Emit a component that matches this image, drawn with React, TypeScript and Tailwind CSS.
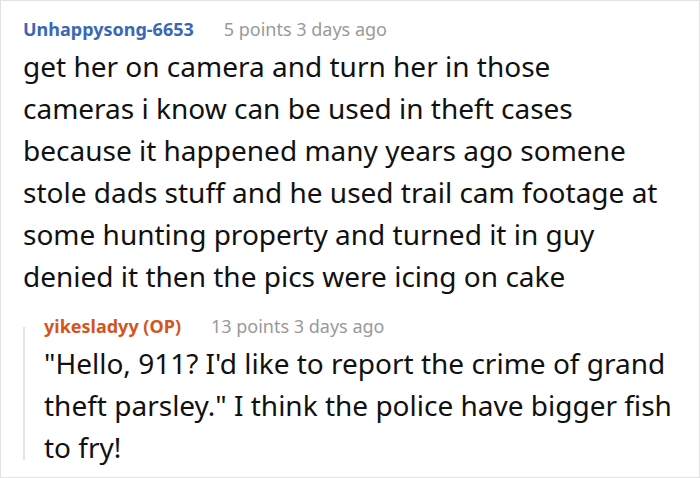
import React from 'react';

const Comment: React.FC<{
  author: string;
  authorClass: string;
  meta: string;
  children: React.ReactNode;
}> = ({ author, authorClass, meta, children }) => (
  <div>
    <div className="flex items-baseline text-[18px] leading-[24px]">
      <span className={`font-bold ${authorClass}`}>{author}</span>
      <span className="ml-[30px] text-[#999999]">{meta}</span>
    </div>
    <p className="mt-[4px] text-[28px] leading-[42px] text-[#111111]">{children}</p>
  </div>
);

const App: React.FC = () => {
  return (
    <div className="w-[700px] h-[478px] overflow-hidden border border-[#e2e2e2] bg-white font-['Noto_Sans',sans-serif]">
      <div className="pl-[22px] pr-[12px] pt-[16px]">
        {/* Parent comment */}
        <Comment author="Unhappysong-6653" authorClass="text-[#3a68b4]" meta="5 points 3 days ago">
          get her on camera and turn her in those
          <br />
          cameras i know can be used in theft cases
          <br />
          because it happened many years ago somene
          <br />
          stole dads stuff and he used trail cam footage at
          <br />
          some hunting property and turned it in guy
          <br />
          denied it then the pics were icing on cake
        </Comment>

        {/* Reply */}
        <div className="mt-[17px] flex">
          <div className="mt-[13px] h-[133px] w-[2px] shrink-0 bg-[#e4e4e4]" />
          <div className="pl-[19px]">
            <Comment author="yikesladyy (OP)" authorClass="text-[#d4541e]" meta="13 points 3 days ago">
              "Hello, 911? I'd like to report the crime of grand
              <br />
              theft parsley." I think the police have bigger fish
              <br />
              to fry!
            </Comment>
          </div>
        </div>
      </div>
    </div>
  );
};

export default App;
